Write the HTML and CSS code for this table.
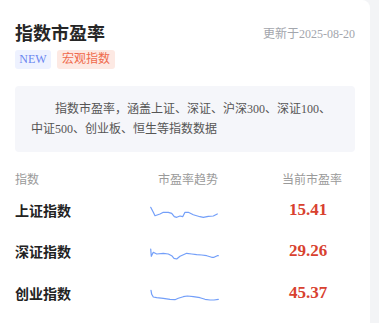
FILE: index.html
```html
<!DOCTYPE html>
<html lang="zh-CN">
<head>
<meta charset="utf-8">
<title>指数市盈率</title>
<link rel="stylesheet" href="styles.css">
</head>
<body>
<div class="card">
  <div class="head">
    <h1 class="title">指数市盈率</h1>
    <span class="date">更新于2025-08-20</span>
  </div>
  <div class="tags">
    <span class="tag tag-new">NEW</span>
    <span class="tag tag-macro">宏观指数</span>
  </div>
  <p class="desc">指数市盈率，涵盖上证、深证、沪深300、深证100、中证500、创业板、恒生等指数数据</p>
  <div class="table">
    <div class="row row-head">
      <span class="c1">指数</span>
      <span class="c2">市盈率趋势</span>
      <span class="c3">当前市盈率</span>
    </div>
    <div class="row">
      <span class="c1 name">上证指数</span>
      <span class="c2"><svg class="spark" viewBox="0 0 70 14" width="70" height="14"><polyline points="0.7,2.3 3.3,7.3 5,10.7 10,9 13.3,7.3 18.3,7.3 21.7,8.3 24.3,11.7 26.7,12.3 30,11 32.7,11.7 35,7.3 38.3,7.3 43.3,9.7 50,11.7 53.3,12.3 58.3,11.3 63.3,11 67.3,9"/></svg></span>
      <span class="c3 val">15.41</span>
    </div>
    <div class="row">
      <span class="c1 name">深证指数</span>
      <span class="c2"><svg class="spark" viewBox="0 0 70 14" width="70" height="14"><polyline points="0.7,2 1.3,9.3 3.3,5.3 6.7,7 13.3,6.3 18.3,7 21.7,8.7 24,11.3 26.7,12 30,9.3 36.7,6.3 41.7,7 46.7,7.7 51.7,8 56.7,8.7 61.7,10.3 64,10.3 67.3,8.7 68.3,8.7"/></svg></span>
      <span class="c3 val">29.26</span>
    </div>
    <div class="row">
      <span class="c1 name">创业指数</span>
      <span class="c2"><svg class="spark" viewBox="0 0 70 14" width="70" height="14"><polyline points="1,2.3 1.7,6.3 3.3,9 6.7,9.7 13.3,10.3 20,11.3 25,11.7 28.3,10.3 33.3,8.7 37.3,8 43.3,8.7 50,9.7 55,11.3 60,12 64,12 68.3,11.3"/></svg></span>
      <span class="c3 val">45.37</span>
    </div>
  </div>
</div>
</body>
</html>
```
FILE: styles.css
```css
* { box-sizing: border-box; }
html, body { margin: 0; padding: 0; }
body {
  background: #f3f4f6;
  font-family: "Liberation Serif", "Noto Sans CJK SC", serif;
  width: 379px;
  height: 323px;
  overflow: hidden;
}
.card {
  width: 370px;
  height: 323px;
  background: #fff;
  border-top-right-radius: 8px;
  padding: 19px 15px 0 15px;
}
.head {
  display: flex;
  justify-content: space-between;
  align-items: center;
  height: 26px;
}
.title {
  margin: 0;
  font-size: 18px;
  line-height: 26px;
  font-weight: bold;
  color: #262626;
  font-family: "Noto Sans CJK SC", sans-serif;
}
.date {
  font-size: 12px;
  color: #a3a6ad;
  margin-top: 2px;
}
.tags {
  display: flex;
  gap: 6px;
  margin-top: 5px;
}
.tag {
  height: 19px;
  line-height: 19px;
  font-size: 12px;
  border-radius: 3px;
  text-align: center;
}
.tag-new { background: #eef2ff; color: #6a86f0; width: 36px; }
.tag-macro { background: #fde9e3; color: #ef6a4c; width: 58px; }
.desc {
  margin: 17px 0 0 0;
  background: #f5f6fa;
  border-radius: 4px;
  padding: 13px 14px 13px 16px;
  font-size: 12px;
  line-height: 20px;
  color: #555;
  text-indent: 2em;
}
.table { margin-top: 19px; }
.row {
  display: grid;
  grid-template-columns: 92px 162px 86px;
  align-items: center;
  height: 41.5px;
}
.row-head {
  height: 18px;
  line-height: 18px;
  font-size: 12px;
  color: #9a9a9a;
}
.c2, .c3 { text-align: center; }
.c2 { display: flex; justify-content: center; }
.row-head .c2 { display: block; }
.name {
  font-size: 14px;
  font-weight: bold;
  color: #222;
  font-family: "Noto Sans CJK SC", sans-serif;
}
.val {
  font-size: 17px;
  font-weight: bold;
  color: #d8412f;
  padding-right: 8px;
}
.spark {
  display: block;
  margin-right: 6px;
  margin-top: 5px;
  fill: none;
  stroke: #5b8ff9;
  stroke-width: 1.2;
  stroke-linejoin: round;
  stroke-linecap: round;
  opacity: 0.85;
}
```
